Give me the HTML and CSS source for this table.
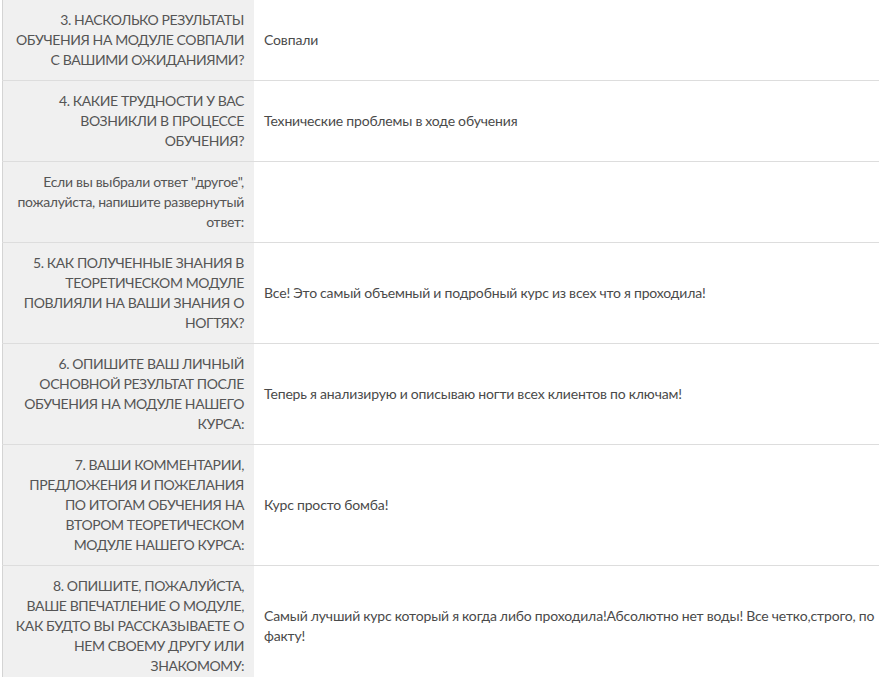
FILE: index.html
```html
<!DOCTYPE html>
<html lang="ru">
<head>
<meta charset="utf-8">
<title>Анкета</title>
<link rel="stylesheet" href="styles.css">
</head>
<body>
<table class="answers">
  <tbody>
    <tr>
      <th class="q q-upper">3. Насколько результаты обучения на модуле совпали с вашими ожиданиями?</th>
      <td class="a">Совпали</td>
    </tr>
    <tr>
      <th class="q q-upper">4. Какие трудности у вас возникли в процессе обучения?</th>
      <td class="a">Технические проблемы в ходе обучения</td>
    </tr>
    <tr>
      <th class="q q-lower">Если вы выбрали ответ "другое", пожалуйста, напишите развернутый ответ:</th>
      <td class="a"></td>
    </tr>
    <tr>
      <th class="q q-upper">5. Как полученные знания в теоретическом модуле повлияли на ваши знания о ногтях?</th>
      <td class="a">Все! Это самый объемный и подробный курс из всех что я проходила!</td>
    </tr>
    <tr>
      <th class="q q-upper">6. Опишите ваш личный основной результат после обучения на модуле нашего курса:</th>
      <td class="a">Теперь я анализирую и описываю ногти всех клиентов по ключам!</td>
    </tr>
    <tr>
      <th class="q q-upper">7. Ваши комментарии, предложения и пожелания по итогам обучения на втором теоретическом модуле нашего курса:</th>
      <td class="a">Курс просто бомба!</td>
    </tr>
    <tr>
      <th class="q q-upper">8. Опишите, пожалуйста, ваше впечатление о модуле, как будто вы рассказываете о нем своему другу или знакомому:</th>
      <td class="a">Самый лучший курс который я когда либо проходила!Абсолютно нет воды! Все четко,строго, по факту!</td>
    </tr>
  </tbody>
</table>
</body>
</html>
```
FILE: styles.css
```css
html, body {
  margin: 0;
  padding: 0;
  background: #ffffff;
}

body {
  padding-left: 2px;
  font-family: Lato, "Open Sans", sans-serif;
  font-size: 14px;
  line-height: 20px;
  color: #555555;
}

.answers {
  width: 877px;
  margin-top: -1px;
  border-collapse: collapse;
  border-left: 1px solid #d4d4d4;
}

.answers tr {
  border-top: 1px solid #dddddd;
  border-bottom: 1px solid #dddddd;
}

.q {
  width: 231px;
  padding: 10px;
  background: #f0f0f0;
  text-align: right;
  font-weight: 400;
  vertical-align: middle;
  color: #555555;
}

.q-upper {
  text-transform: uppercase;
  letter-spacing: -0.4px;
}

.q-lower {
  letter-spacing: -0.3px;
}

.a {
  padding: 10px 0 10px 10px;
  text-align: left;
  vertical-align: middle;
  color: #4a4a4a;
  letter-spacing: -0.15px;
  word-spacing: -0.3px;
}
```
